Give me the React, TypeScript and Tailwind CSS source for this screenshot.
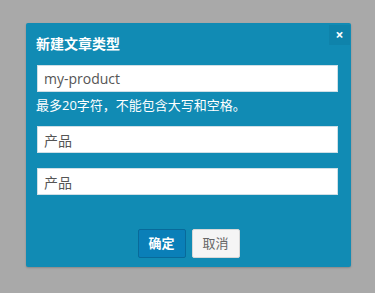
export default function App() {
  const font = { fontFamily: '"Open Sans", "Noto Sans CJK SC", sans-serif' };
  return (
    <div className="w-[375px] h-[293px] bg-[#a9a9a9] pt-[23px] pl-[26px]" style={font}>
      <div className="relative w-[325px] h-[244px] bg-[#118bb4] rounded-[2px] shadow-[0_1px_2px_rgba(0,0,0,0.2)] pl-[11px] pr-[13px]">
        <button className="absolute right-[1px] top-[2px] w-[21px] h-[20px] bg-[#0f83ab] text-white text-[14px] font-bold leading-[20px] flex items-center justify-center">
          ×
        </button>
        <h3 className="pt-[11px] -ml-px text-white text-[14px] font-bold leading-[20px]">新建文章类型</h3>
        <input
          defaultValue="my-product"
          className="mt-[11px] block w-[301px] h-[27px] bg-white border border-[#cfdfe6] px-[6px] text-[14px] text-[#555] outline-none"
        />
        <p className="mt-[4px] -ml-px text-white text-[13px] leading-[18px]">最多20字符，不能包含大写和空格。</p>
        <input
          defaultValue="产品"
          className="mt-[12px] block w-[301px] h-[27px] bg-white border border-[#cfdfe6] px-[6px] text-[14px] text-[#555] outline-none"
        />
        <input
          defaultValue="产品"
          className="mt-[15px] block w-[301px] h-[27px] bg-white border border-[#cfdfe6] px-[6px] text-[14px] text-[#555] outline-none"
        />
        <div className="mt-[34px] flex justify-center gap-[6px] pl-[2px]">
          <button className="w-[48px] h-[29px] bg-[#0a7fb8] border border-[#086a9a] rounded-[2px] text-white text-[13px] font-bold">确定</button>
          <button className="w-[48px] h-[29px] bg-[#f5f5f5] border border-[#d8d8d8] rounded-[2px] text-[#666] text-[13px]">取消</button>
        </div>
      </div>
    </div>
  );
}
